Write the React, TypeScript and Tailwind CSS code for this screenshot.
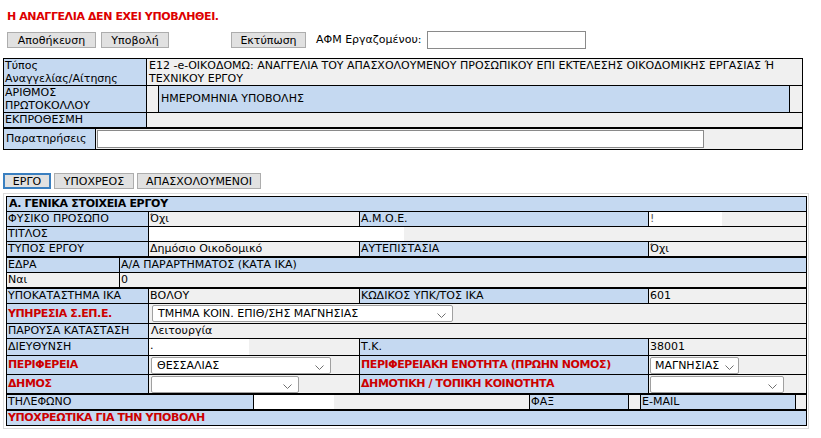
import React from "react";

const B = "bg-[#c5d9f1]";
const G = "bg-[#f0f0f0]";
const RED = "text-[#cc0000] font-bold tracking-[-0.4px]";

function Chevron() {
  return (
    <svg width="9" height="5" viewBox="0 0 9 5" className="shrink-0 mt-[3px]">
      <path d="M0.5 0.5 L4.5 4.5 L8.5 0.5" fill="none" stroke="#707070" strokeWidth="1" />
    </svg>
  );
}

function Select({ className, text }: { className: string; text?: string }) {
  return (
    <div
      className={`flex items-center justify-between bg-white border border-[#a0a0a0] rounded-[2px] pl-[5px] pr-[6px] leading-[14px] ${className}`}
    >
      <span className="whitespace-nowrap">{text ?? ""}</span>
      <Chevron />
    </div>
  );
}

function Btn({ className, children }: { className: string; children: React.ReactNode }) {
  return (
    <div
      className={`h-[16px] flex items-center justify-center bg-[#e1e1e1] border border-[#adadad] leading-none ${className}`}
    >
      {children}
    </div>
  );
}

export default function App() {
  return (
    <div className="w-[821px] h-[438px] bg-white text-black text-[11px] font-['DejaVu_Sans',sans-serif] overflow-hidden">
      {/* Title */}
      <div className={`pt-[10px] pl-[7px] h-[23px] leading-[13px] ${RED} text-[#dd0000]`}>
        Η ΑΝΑΓΓΕΛΙΑ ΔΕΝ ΕΧΕΙ ΥΠΟΒΛΗΘΕΙ.
      </div>

      {/* Buttons row */}
      <div className="mt-[8px] h-[18px] flex items-center">
        <Btn className="ml-[7px] w-[89px]">Αποθήκευση</Btn>
        <Btn className="ml-[5px] w-[68px]">Υποβολή</Btn>
        <Btn className="ml-[62px] w-[75px]">Εκτύπωση</Btn>
        <div className="ml-[10px] w-[111px] whitespace-nowrap leading-[18px]">ΑΦΜ Εργαζομένου:</div>
        <div className="w-[159px] h-[18px] bg-white border border-[#8a8a8a]" />
      </div>

      {/* Top table */}
      <div className="mt-[9px] ml-[3px] w-[800px] border border-black">
        <div className="flex h-[26px]">
          <div className={`w-[142px] ${B} leading-[13px] pl-[1px]`}>
            Τύπος
            <br />
            Αναγγελίας/Αίτησης
          </div>
          <div className={`flex-1 border-l border-black ${G} leading-[13px] pl-[2px]`}>
            Ε12 -e-ΟΙΚΟΔΟΜΩ: ΑΝΑΓΓΕΛΙΑ ΤΟΥ ΑΠΑΣΧΟΛΟΥΜΕΝΟΥ ΠΡΟΣΩΠΙΚΟΥ ΕΠΙ ΕΚΤΕΛΕΣΗΣ ΟΙΚΟΔΟΜΙΚΗΣ ΕΡΓΑΣΙΑΣ Ή
            <br />
            ΤΕΧΝΙΚΟΥ ΕΡΓΟΥ
          </div>
        </div>
        <div className="flex h-[27px] border-t border-black">
          <div className={`w-[142px] ${B} leading-[13px] pl-[1px]`}>
            ΑΡΙΘΜΟΣ
            <br />
            ΠΡΩΤΟΚΟΛΛΟΥ
          </div>
          <div className={`w-[12px] border-l border-black ${G}`} />
          <div className={`w-[631px] border-l border-black ${B} flex items-center pl-[2px]`}>
            ΗΜΕΡΟΜΗΝΙΑ ΥΠΟΒΟΛΗΣ
          </div>
          <div className={`flex-1 border-l border-black ${G}`} />
        </div>
        <div className="flex h-[15px] border-t border-black">
          <div className={`w-[142px] ${B} leading-[14px] pl-[1px]`}>ΕΚΠΡΟΘΕΣΜΗ</div>
          <div className={`flex-1 border-l border-black ${G}`} />
        </div>
      </div>
      <div className="ml-[3px] w-[800px] h-[22px] border border-black flex">
        <div className={`w-[91px] ${B} flex items-center pl-[2px]`}>Παρατηρήσεις</div>
        <div className={`flex-1 border-l border-black ${G} pl-[1px] pt-[1px]`}>
          <div className="w-[607px] h-[18px] bg-white border border-[#8a8a8a]" />
        </div>
      </div>

      {/* Tabs */}
      <div className="mt-[23px] h-[16px] flex">
        <div className="ml-[3px] w-[48px] h-[16px] flex items-center justify-center bg-[#e1e1e1] border-2 border-[#3a7fc0] leading-none">
          ΕΡΓΟ
        </div>
        <div className="ml-[3px] w-[80px] h-[16px] flex items-center justify-center bg-[#e1e1e1] border border-[#adadad] leading-none">
          ΥΠΟΧΡΕΟΣ
        </div>
        <div className="ml-[3px] w-[124px] h-[16px] flex items-center justify-center bg-[#e1e1e1] border border-[#adadad] leading-none">
          ΑΠΑΣΧΟΛΟΥΜΕΝΟΙ
        </div>
      </div>

      {/* Main panel */}
      <div className="mt-[4px] ml-[3px] w-[806px] border border-[#dadada] pl-[2px] pt-[2px] pb-[2px]">
        <div className="w-[801px] leading-[14px]">
          {/* Group 1 */}
          <div className="border border-black">
            <div className={`h-[14px] ${B} font-bold tracking-[-0.3px] pl-[2px]`}>Α. ΓΕΝΙΚΑ ΣΤΟΙΧΕΙΑ ΕΡΓΟΥ</div>
            <div className="flex h-[15px] border-t border-black">
              <div className={`w-[141px] ${B} pl-[1px]`}>ΦΥΣΙΚΟ ΠΡΟΣΩΠΟ</div>
              <div className={`w-[211px] border-l border-black ${G} pl-[1px]`}>Όχι</div>
              <div className={`w-[289px] border-l border-black ${B} pl-[1px]`}>Α.Μ.Ο.Ε.</div>
              <div className={`flex-1 border-l border-black ${G}`}>
                <div className="w-[73px] h-full bg-white pl-[1px] text-[#555]">!</div>
              </div>
            </div>
            <div className="flex h-[15px] border-t border-black">
              <div className={`w-[141px] ${B} pl-[1px]`}>ΤΙΤΛΟΣ</div>
              <div className={`flex-1 border-l border-black ${G}`}>
                <div className="w-[255px] h-full bg-white" />
              </div>
            </div>
            <div className="flex h-[15px] border-t border-black">
              <div className={`w-[141px] ${B} pl-[1px]`}>ΤΥΠΟΣ ΕΡΓΟΥ</div>
              <div className={`w-[211px] border-l border-black ${G} pl-[1px]`}>Δημόσιο Οικοδομικό</div>
              <div className={`w-[289px] border-l border-black ${B} pl-[1px]`}>ΑΥΤΕΠΙΣΤΑΣΙΑ</div>
              <div className={`flex-1 border-l border-black ${G} pl-[1px]`}>Όχι</div>
            </div>
          </div>

          {/* Group 2 */}
          <div className="border border-black">
            <div className="flex h-[14px]">
              <div className={`w-[112px] ${B} pl-[1px]`}>ΕΔΡΑ</div>
              <div className={`flex-1 border-l border-black ${B} pl-[1px]`}>Α/Α ΠΑΡΑΡΤΗΜΑΤΟΣ (ΚΑΤΑ ΙΚΑ)</div>
            </div>
            <div className="flex h-[15px] border-t border-black">
              <div className={`w-[112px] ${G} pl-[1px]`}>Ναι</div>
              <div className={`flex-1 border-l border-black ${G} pl-[1px]`}>0</div>
            </div>
          </div>

          {/* Group 3 */}
          <div className="border border-black">
            <div className="flex h-[14px]">
              <div className={`w-[141px] ${B} pl-[1px]`}>ΥΠΟΚΑΤΑΣΤΗΜΑ ΙΚΑ</div>
              <div className={`w-[211px] border-l border-black ${G} pl-[1px]`}>ΒΟΛΟΥ</div>
              <div className={`w-[289px] border-l border-black ${B} pl-[1px]`}>ΚΩΔΙΚΟΣ ΥΠΚ/ΤΟΣ ΙΚΑ</div>
              <div className={`flex-1 border-l border-black ${G} pl-[1px]`}>601</div>
            </div>
            <div className="flex h-[20px] border-t border-black">
              <div className={`w-[141px] ${B} pl-[1px] flex items-center ${RED}`}>ΥΠΗΡΕΣΙΑ Σ.ΕΠ.Ε.</div>
              <div className={`flex-1 border-l border-black ${G} pl-[3px] pt-[1px]`}>
                <Select className="w-[301px] h-[17px]" text="ΤΜΗΜΑ ΚΟΙΝ. ΕΠΙΘ/ΣΗΣ ΜΑΓΝΗΣΙΑΣ" />
              </div>
            </div>
            <div className="flex h-[15px] border-t border-black">
              <div className={`w-[141px] ${B} pl-[1px]`}>ΠΑΡΟΥΣΑ ΚΑΤΑΣΤΑΣΗ</div>
              <div className={`flex-1 border-l border-black ${G} pl-[2px]`}>Λειτουργία</div>
            </div>
            <div className="flex h-[17px] border-t border-black">
              <div className={`w-[141px] ${B} pl-[1px] flex items-center`}>ΔΙΕΥΘΥΝΣΗ</div>
              <div className={`w-[211px] border-l border-black ${G}`}>
                <div className="w-[100px] h-full bg-white pl-[1px]">.</div>
              </div>
              <div className={`w-[289px] border-l border-black ${B} pl-[1px] flex items-center`}>Τ.Κ.</div>
              <div className={`flex-1 border-l border-black ${G} pl-[1px] flex items-center`}>38001</div>
            </div>
            <div className="flex h-[19px] border-t border-black">
              <div className={`w-[141px] ${B} pl-[1px] flex items-center ${RED}`}>ΠΕΡΙΦΕΡΕΙΑ</div>
              <div className={`w-[211px] border-l border-black ${G} pl-[2px] pt-[1px]`}>
                <Select className="w-[180px] h-[17px]" text="ΘΕΣΣΑΛΙΑΣ" />
              </div>
              <div className={`w-[289px] border-l border-black ${B} pl-[1px] flex items-center ${RED} whitespace-nowrap`}>
                ΠΕΡΙΦΕΡΕΙΑΚΗ ΕΝΟΤΗΤΑ (ΠΡΩΗΝ ΝΟΜΟΣ)
              </div>
              <div className={`flex-1 border-l border-black ${G} pl-[1px] pt-[1px]`}>
                <Select className="w-[89px] h-[17px] !pr-[4px] !pl-[4px]" text="ΜΑΓΝΗΣΙΑΣ" />
              </div>
            </div>
            <div className="flex h-[19px] border-t border-black">
              <div className={`w-[141px] ${B} pl-[1px] flex items-center ${RED}`}>ΔΗΜΟΣ</div>
              <div className={`w-[211px] border-l border-black ${G} pl-[2px] pt-[1px]`}>
                <Select className="w-[148px] h-[17px]" />
              </div>
              <div className={`w-[289px] border-l border-black ${B} pl-[1px] flex items-center ${RED} whitespace-nowrap`}>
                ΔΗΜΟΤΙΚΗ / ΤΟΠΙΚΗ ΚΟΙΝΟΤΗΤΑ
              </div>
              <div className={`flex-1 border-l border-black ${G} pl-[1px] pt-[1px]`}>
                <Select className="w-[134px] h-[17px]" />
              </div>
            </div>
          </div>

          {/* Group 4 */}
          <div className="border border-black">
            <div className="flex h-[14px]">
              <div className={`w-[246px] ${B} pl-[1px]`}>ΤΗΛΕΦΩΝΟ</div>
              <div className={`w-[276px] border-l border-black ${G}`}>
                <div className="w-[80px] h-full bg-white" />
              </div>
              <div className={`w-[99px] border-l border-black ${B} pl-[1px]`}>ΦΑΞ</div>
              <div className={`w-[12px] border-l border-black ${G}`} />
              <div className={`w-[155px] border-l border-black ${B} pl-[1px]`}>E-MAIL</div>
              <div className={`flex-1 border-l border-black ${G}`} />
            </div>
          </div>

          {/* Group 5 */}
          <div className="border border-black">
            <div className={`h-[14px] ${B} pl-[1px] ${RED}`}>ΥΠΟΧΡΕΩΤΙΚΑ ΓΙΑ ΤΗΝ ΥΠΟΒΟΛΗ</div>
          </div>
        </div>
      </div>
    </div>
  );
}
